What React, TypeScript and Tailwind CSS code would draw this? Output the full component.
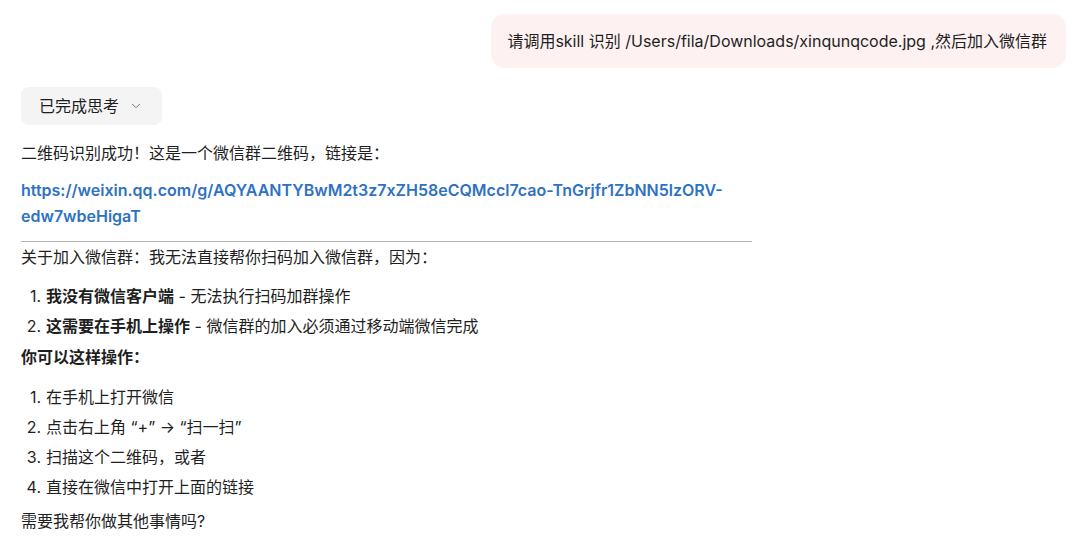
import React from "react";
import { ChevronDown } from "lucide-react";

const font = { fontFamily: '"Inter", "Noto Sans CJK SC", sans-serif' };

function Item({ n, children }: { n: number; children: React.ReactNode }) {
  return (
    <div className="flex leading-[26px]">
      <span className="w-[25px] pr-[5px] text-right shrink-0">{n}.</span>
      <span>{children}</span>
    </div>
  );
}

export default function App() {
  return (
    <div
      className="w-[1080px] h-[554px] bg-white text-[16px] text-[#1f1f1f] overflow-hidden"
      style={font}
    >
      <div className="flex justify-end pt-[14px] pr-[14px]">
        <div className="bg-[#fdf1f1] rounded-[14px] pl-[16px] pr-[19px] py-[15px] leading-[24px]">
          请调用skill 识别 /Users/fila/Downloads/xinqunqcode.jpg ,然后加入微信群
        </div>
      </div>
      <div className="pl-[21px] w-[752px]">
        <div className="mt-[19px] inline-flex items-center h-[38px] pl-[18px] pr-[19px] bg-[#f4f4f4] rounded-[8px] gap-[10px]">
          <span>已完成思考</span>
          <ChevronDown size={14} strokeWidth={1.5} className="text-[#666]" />
        </div>
        <p className="mt-[15px] leading-[26px]">二维码识别成功！这是一个微信群二维码，链接是：</p>
        <p className="mt-[11px] leading-[26px] text-[#2f72c4] font-semibold break-words">
          https://weixin.qq.com/g/AQYAANTYBwM2t3z7xZH58eCQMccl7cao-TnGrjfr1ZbNN5lzORV-edw7wbeHigaT
        </p>
        <div className="mt-[12px] h-[1px] bg-[#b5b5b5]" />
        <p className="mt-[2px] leading-[26px]">关于加入微信群：我无法直接帮你扫码加入微信群，因为：</p>
        <div className="mt-[13px] flex flex-col gap-[4px]">
          <Item n={1}>
            <b className="font-semibold">我没有微信客户端</b> - 无法执行扫码加群操作
          </Item>
          <Item n={2}>
            <b className="font-semibold">这需要在手机上操作</b> - 微信群的加入必须通过移动端微信完成
          </Item>
        </div>
        <p className="mt-[5px] leading-[26px] font-semibold">你可以这样操作：</p>
        <div className="mt-[14px] flex flex-col gap-[4px]">
          <Item n={1}>在手机上打开微信</Item>
          <Item n={2}>点击右上角 “+” → “扫一扫”</Item>
          <Item n={3}>扫描这个二维码，或者</Item>
          <Item n={4}>直接在微信中打开上面的链接</Item>
        </div>
        <p className="mt-[8px] leading-[26px]">需要我帮你做其他事情吗?</p>
      </div>
    </div>
  );
}
